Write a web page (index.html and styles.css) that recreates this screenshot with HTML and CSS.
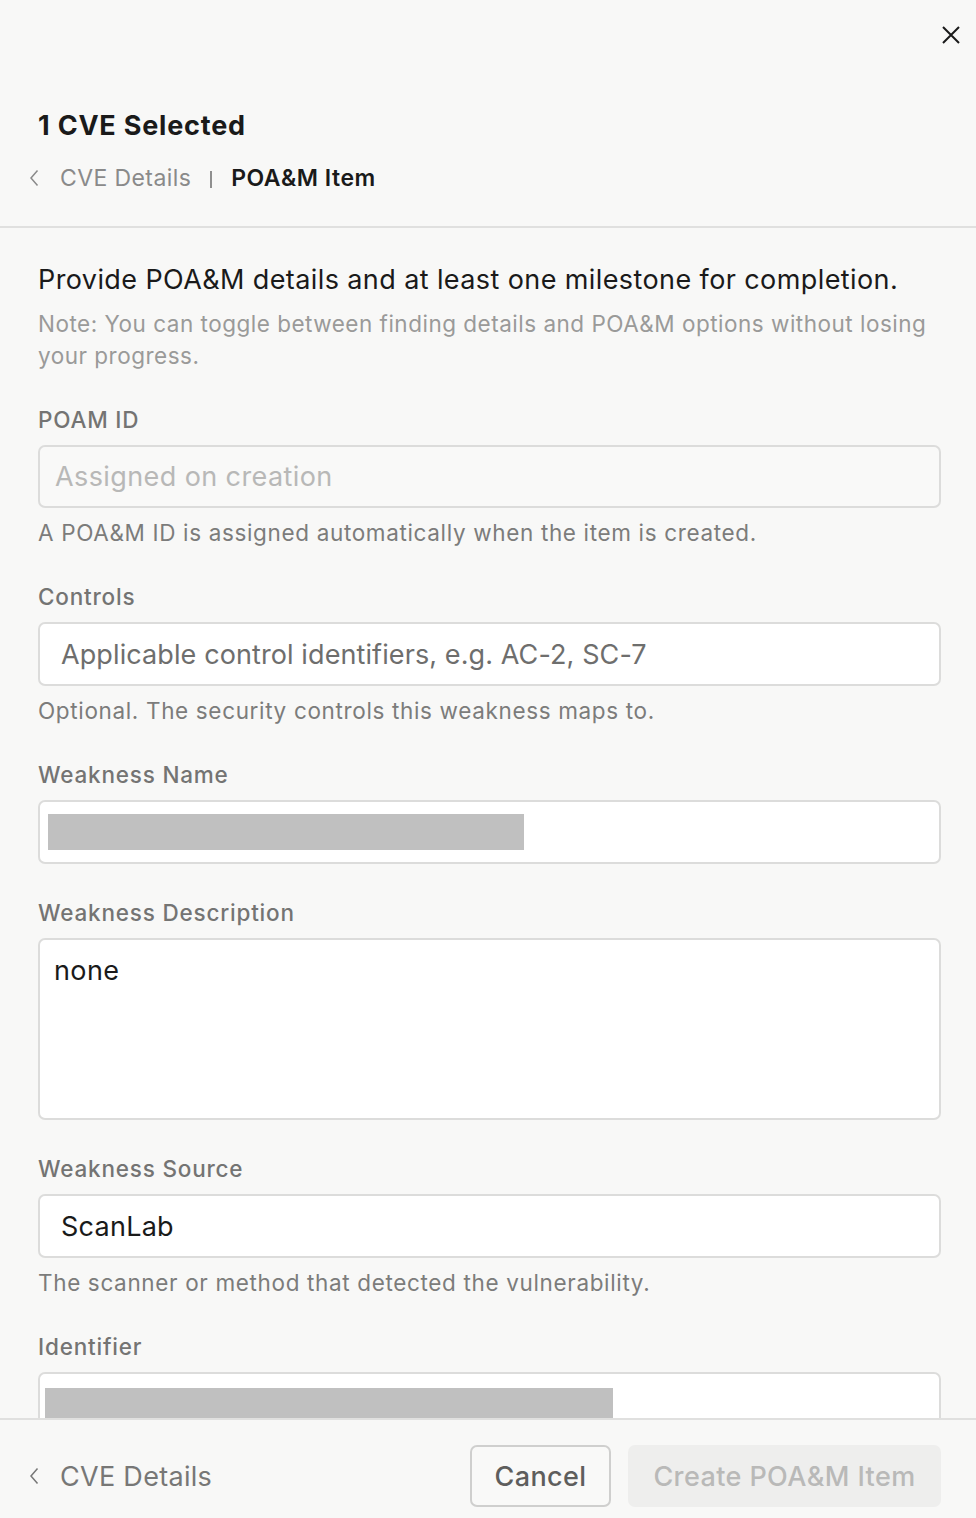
FILE: index.html
```html
<!DOCTYPE html>
<html lang="en">
<head>
<meta charset="utf-8">
<title>POA&amp;M Item</title>
<link rel="stylesheet" href="styles.css">
</head>
<body>
<div class="panel">
  <header class="header">
    <button class="close" aria-label="Close">
      <svg width="20" height="20" viewBox="0 0 20 20"><path d="M2 2 L18 18 M18 2 L2 18" stroke="#1a1a1a" stroke-width="2" fill="none"/></svg>
    </button>
    <h1 class="title">1 CVE Selected</h1>
    <nav class="crumbs">
      <span class="chev"><svg width="12" height="18" viewBox="0 0 12 18"><path d="M9.5 1.5 L3 9 L9.5 16.5" stroke="#8a8a8a" stroke-width="1.5" fill="none"/></svg></span>
      <span class="crumb">CVE Details</span>
      <span class="sep"></span>
      <span class="crumb active">POA&amp;M Item</span>
    </nav>
  </header>
  <main class="body">
    <div class="scroll">
      <h2 class="lead">Provide POA&amp;M details and at least one milestone for completion.</h2>
      <p class="note">Note: You can toggle between finding details and POA&amp;M options without losing your progress.</p>

      <div class="field">
        <label class="label">POAM ID</label>
        <div class="input disabled"><span class="ph light">Assigned on creation</span></div>
        <p class="help">A POA&amp;M ID is assigned automatically when the item is created.</p>
      </div>

      <div class="field">
        <label class="label">Controls</label>
        <div class="input"><span class="ph">Applicable control identifiers, e.g. AC-2, SC-7</span></div>
        <p class="help">Optional. The security controls this weakness maps to.</p>
      </div>

      <div class="field">
        <label class="label">Weakness Name</label>
        <div class="input redacted-wrap"><span class="redact redact-name"></span></div>
      </div>

      <div class="field">
        <label class="label">Weakness Description</label>
        <div class="textarea">none</div>
      </div>

      <div class="field">
        <label class="label">Weakness Source</label>
        <div class="input"><span class="val">ScanLab</span></div>
        <p class="help">The scanner or method that detected the vulnerability.</p>
      </div>

      <div class="field">
        <label class="label">Identifier</label>
        <div class="input redacted-wrap id"><span class="redact redact-id"></span></div>
      </div>
    </div>
  </main>
  <footer class="footer">
    <a class="back">
      <span class="chev"><svg width="12" height="18" viewBox="0 0 12 18"><path d="M9.5 1.5 L3 9 L9.5 16.5" stroke="#777" stroke-width="1.5" fill="none"/></svg></span>
      <span>CVE Details</span>
    </a>
    <div class="actions">
      <button class="btn cancel">Cancel</button>
      <button class="btn create" disabled>Create POA&amp;M Item</button>
    </div>
  </footer>
</div>
</body>
</html>
```
FILE: styles.css
```css
* { box-sizing: border-box; }
html, body { margin: 0; padding: 0; }
body {
  background: #f8f8f7;
  font-family: Inter, "Noto Sans", sans-serif;
  color: #1a1a1a;
}
.panel {
  height: 1518px;
  display: flex;
  flex-direction: column;
  overflow: hidden;
}
.header {
  position: relative;
  padding: 100px 35px 0 38px;
  height: 228px;
  border-bottom: 2px solid #e0e0df;
  flex: none;
}
.close {
  position: absolute;
  top: 25px;
  right: 15px;
  background: none;
  border: 0;
  padding: 0;
  width: 20px;
  height: 20px;
  cursor: pointer;
}
.title {
  margin: 0;
  font-size: 27px;
  line-height: 52px;
  font-weight: 700;
  letter-spacing: 0.8px;
  color: #1a1a1a;
}
.crumbs {
  display: flex;
  align-items: center;
  margin-left: -10px;
  height: 52px;
  font-size: 23px;
  letter-spacing: 0.4px;
}
.chev { display: inline-flex; width: 12px; margin-right: 20px; }
.crumb { color: #8a8a8a; }
.crumb.active { color: #1a1a1a; font-weight: 600; letter-spacing: 0.5px; }
.sep {
  display: inline-block;
  width: 2px;
  height: 17px;
  background: #8f8f8f;
  margin: 2px 19px 0 19px;
}
.body {
  flex: 1;
  overflow: hidden;
  min-height: 0;
}
.scroll {
  padding: 34px 35px 0 38px;
}
.lead {
  margin: 0;
  font-size: 27px;
  line-height: 36px;
  font-weight: 400;
  letter-spacing: 0.4px;
  color: #1a1a1a;
}
.note {
  margin: 10px 0 0;
  font-size: 22.5px;
  line-height: 32px;
  color: #9a9a99;
  letter-spacing: 0.5px;
}
.field { margin-top: 33px; }
.field + .field { margin-top: 34px; }
.label {
  display: block;
  font-size: 22.5px;
  line-height: 30px;
  font-weight: 500;
  color: #747473;
  letter-spacing: 0.8px;
  margin-bottom: 10px;
}
.input {
  height: 64px;
  background: #fff;
  border: 2px solid #dcdcdb;
  border-radius: 7px;
  display: flex;
  align-items: center;
  padding: 0 21px;
  font-size: 27px;
  letter-spacing: 0.25px;
}
.input.disabled {
  height: 63px;
  background: #f9f9f8;
  padding: 0 15px;
}
.ph { color: #6e6e6d; letter-spacing: 0.1px; }
.ph.light { color: #b8b8b7; letter-spacing: 0.4px; }
.val { color: #1a1a1a; }
.help {
  margin: 10px 0 0;
  font-size: 22.5px;
  line-height: 30px;
  color: #7c7c7b;
  letter-spacing: 0.65px;
}
.redacted-wrap { padding: 0 8px; }
.redact { display: block; background: #c0c0c0; }
.redact-name { width: 476px; height: 36px; }
.input.id { align-items: flex-start; padding: 14px 5px 0; }
.redact-id { width: 568px; height: 30px; }
.textarea {
  height: 182px;
  background: #fff;
  border: 2px solid #dcdcdb;
  border-radius: 7px;
  padding: 13px 14px;
  font-size: 27px;
  line-height: 36px;
  letter-spacing: 0.4px;
  color: #1a1a1a;
}
.footer {
  flex: none;
  height: 100px;
  border-top: 2px solid #e0e0df;
  background: #f8f8f7;
  display: flex;
  justify-content: space-between;
  align-items: flex-start;
  padding: 25px 35px 0 28px;
}
.back {
  display: flex;
  align-items: center;
  height: 62px;
  font-size: 27px;
  color: #777776;
  letter-spacing: 0.3px;
}
.actions { display: flex; gap: 17px; }
.btn {
  height: 62px;
  font-family: inherit;
  font-size: 27px;
  font-weight: 500;
  letter-spacing: 0.4px;
  border-radius: 7px;
  padding: 0;
}
.cancel {
  background: #f9f9f8;
  border: 2px solid #cfcfce;
  color: #5e5e5d;
  width: 141px;
}
.create {
  background: #eeeeed;
  border: 0;
  color: #b9b9b8;
  width: 313px;
}
```
